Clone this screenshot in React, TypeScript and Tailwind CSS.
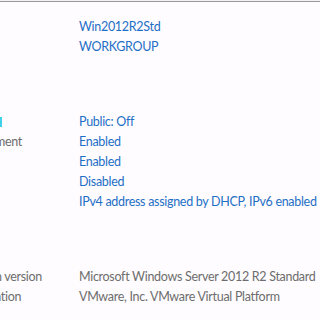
import React from "react";

const Row = (props: { label?: string; value: string; link?: boolean }) => {
  return (
    <div className="flex h-5 items-center whitespace-nowrap">
      <span className="-ml-[5px] w-[84px] shrink-0 text-[#6d6d6d]">{props.label}</span>
      <span className={props.link === false ? "text-[#6d6d6d]" : "text-[#1e6fc6]"}>
        {props.value}
      </span>
    </div>
  );
};

const App = () => {
  return (
    <div
      className="relative h-[320px] w-[320px] overflow-hidden bg-[#fefcfe] text-[12.5px] tracking-[-0.3px]"
      style={{ fontFamily: '"Segoe UI", Lato, "Noto Sans", sans-serif' }}
    >
      <div className="h-px bg-[#f4f2f4]" />
      <div className="h-px bg-[#9a9a9a]" />
      <div className="flex flex-col pt-[15px]">
        <Row value="Win2012R2Std" />
        <Row value="WORKGROUP" />
        <div className="h-[55px]" />
        <div className="relative">
          <span className="absolute left-0 top-[5px] h-[10px] w-[2px] bg-[#3fd0ea]" />
          <Row value="Public: Off" />
        </div>
        <Row label="ment" value="Enabled" />
        <Row value="Enabled" />
        <Row value="Disabled" />
        <Row value="IPv4 address assigned by DHCP, IPv6 enabled" />
        <div className="h-[55px]" />
        <Row label="n version" value="Microsoft Windows Server 2012 R2 Standard" link={false} />
        <Row label="ation" value="VMware, Inc. VMware Virtual Platform" link={false} />
      </div>
    </div>
  );
};

export default App;
